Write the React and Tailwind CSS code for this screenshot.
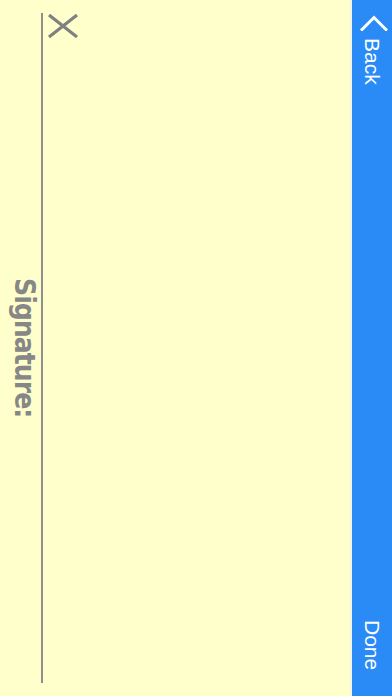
export default function App() {
  return (
    <div className="flex h-[696px] w-[392px] bg-[#ffffcc] overflow-hidden" style={{ fontFamily: '"Liberation Sans", Arial, sans-serif' }}>
      <div className="flex flex-1 pt-[13px] pb-[13px] pl-[6px]">
        <div className="flex w-[35px] items-center justify-center">
          <span
            className="text-[28px] font-bold leading-none text-[#878787] [writing-mode:vertical-rl] tracking-[-1px]"
            style={{ fontFamily: '"Liberation Sans Narrow", "DejaVu Sans Condensed", "Liberation Sans", sans-serif' }}
          >
            Signature:
          </span>
        </div>
        <div className="w-[2px] bg-[#8e8e8e]" />
        <div className="pl-[5px] pt-[1px]">
          <svg width="30" height="24" viewBox="0 0 30 24">
            <path d="M1 1 L29 23 M29 1 L1 23" stroke="#808080" strokeWidth="3.2" fill="none" />
          </svg>
        </div>
      </div>
      <div className="w-[2px] bg-[#f4f4e4]" />
      <div className="flex w-[40px] flex-col items-center justify-between bg-[#2a8bf7] pt-[15px] pb-[26px] text-white">
        <div className="flex flex-col items-center">
          <svg width="28" height="16" viewBox="0 0 28 16" className="ml-[3px]">
            <path d="M2 14.5 L14 2.5 L26 14.5" stroke="#ffffff" strokeWidth="3" fill="none" strokeLinecap="square" />
          </svg>
          <span className="mt-[7px] text-[21px] leading-none [writing-mode:vertical-rl]">Back</span>
        </div>
        <span className="text-[21px] leading-none [writing-mode:vertical-rl]">Done</span>
      </div>
    </div>
  );
}
